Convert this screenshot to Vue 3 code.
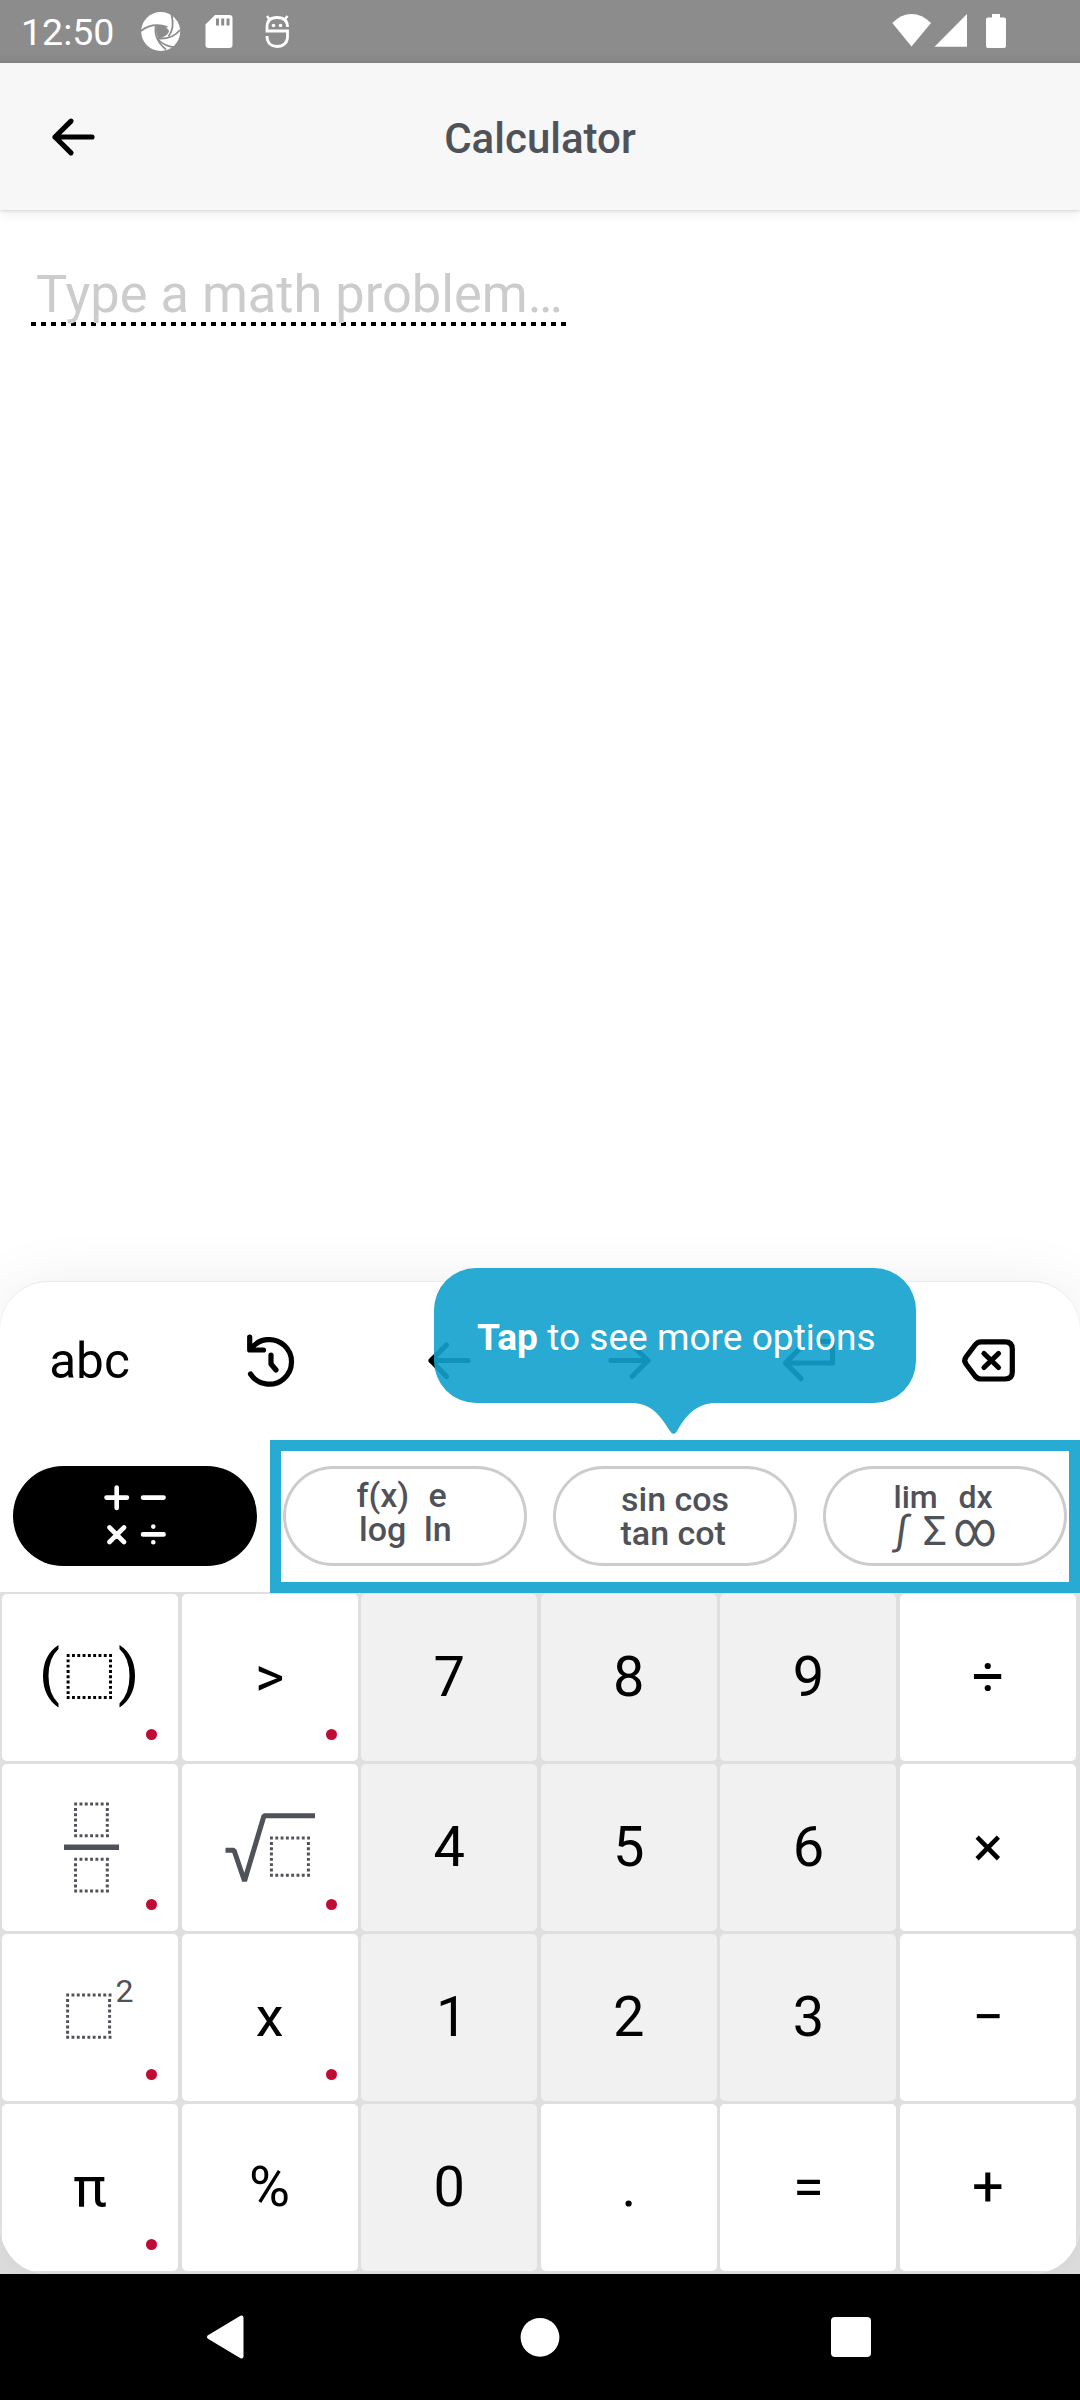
<script setup>
const keys = [
  { id: 'paren', dot: true, icon: 'paren' },
  { label: '>', dot: true },
  { label: '7', digit: true },
  { label: '8', digit: true },
  { label: '9', digit: true },
  { label: '÷' },
  { id: 'frac', dot: true, icon: 'frac' },
  { id: 'sqrt', dot: true, icon: 'sqrt' },
  { label: '4', digit: true },
  { label: '5', digit: true },
  { label: '6', digit: true },
  { label: '×' },
  { id: 'pow', dot: true, icon: 'pow' },
  { label: 'x', dot: true },
  { label: '1', digit: true, one: true },
  { label: '2', digit: true },
  { label: '3', digit: true },
  { label: '−' },
  { label: 'π', dot: true },
  { label: '%' },
  { label: '0', digit: true },
  { label: '.' },
  { label: '=' },
  { label: '+' },
]
</script>

<template>
  <div class="screen">
    <div class="status">
      <span class="clock">12:50</span>
      <svg class="notif" width="170" height="63" viewBox="130 0 170 63">
        <circle cx="160.7" cy="31.5" r="19.5" fill="#fff" />
        <g fill="none" stroke="#8c8c8c" stroke-width="1.8">
          <path d="M171.5 14.5Q175 28 168.5 36.500" />
          <path d="M141 31Q152 22 167.500 27" />
          <path d="M156 25Q153 39 166 49.500" />
          <path d="M180 30Q172 40 157 38.500" />
          <path d="M158 39.500Q166 48 178 47" />
        </g>
        <path d="M156.500 25.500Q164 24 169 30.500Q169 36 158.500 38.800Q155 32 156.500 25.500Z" fill="#8c8c8c" />
        <path d="M215 15h14.500a3 3 0 0 1 3 3v27a3 3 0 0 1-3 3h-21a3 3 0 0 1-3-3V24.500Z" fill="#fff" />
        <path d="M217.500 18.500v7M222.700 18.500v7M228 18.500v7" stroke="#8c8c8c" stroke-width="3" />
        <g fill="none" stroke="#fff" stroke-width="2.800">
          <path d="M287.500 27C287.500 20 283 17.500 277 17.500S267 20 267 27V31H287.500V37C287.500 43 283 46.500 277 46.500S267 43 267 36" />
          <path d="M267 16l3 4M287.500 16l-3 4" stroke-width="2.400" />
        </g>
        <circle cx="273.500" cy="25.500" r="1.800" fill="#fff" />
        <circle cx="280.500" cy="25.500" r="1.800" fill="#fff" />
      </svg>
      <svg class="system" width="120" height="63" viewBox="890 0 120 63" fill="#fff">
        <path d="M911.500 46.500L892.300 23Q901 14 911.500 14T931 23Z" />
        <path d="M934.500 46.700L967 14V46.700Z" />
        <path d="M992 14h8v3.500h4a2 2 0 0 1 2 2V46a2 2 0 0 1-2 2h-16a2 2 0 0 1-2-2V19.500a2 2 0 0 1 2-2h4Z" />
      </svg>
    </div>

    <header class="header">
      <svg class="back" width="60" height="60" viewBox="43 106.500 60 60" fill="none" stroke="#000" stroke-width="5.200" stroke-linecap="round" stroke-linejoin="round">
        <path d="M92 136.500H55M71 120.700L55 136.500L71 152.300" />
      </svg>
      <h1>Calculator</h1>
    </header>

    <main class="work">
      <div class="field">
        <span>Type a math problem…</span>
      </div>
    </main>

    <div class="dock">
    <section class="panel">
      <div class="toolbar">
        <div class="tool abc">abc</div>
        <svg class="tool" viewBox="180 1282 180 158">
          <path d="M250.500 1374A22.300 22.300 0 1 0 251 1349M249.700 1337V1350H263.500M271 1355V1364L276 1370" />
        </svg>
        <svg class="tool" viewBox="360 1282 180 158">
          <path d="M468 1360.500H431M446.500 1345L431 1360.500L446.500 1376.500" />
        </svg>
        <svg class="tool" viewBox="540 1282 180 158">
          <path d="M611 1360.500H648M632 1345L648 1360.500L632 1376.500" />
        </svg>
        <svg class="tool" viewBox="720 1282 180 158">
          <path d="M818 1341.500H832.500V1363H785.500M801 1347.500L785.500 1363L801 1378.700" />
        </svg>
        <svg class="tool" viewBox="900 1282 180 158">
          <path d="M981 1341.800H1005Q1012.300 1341.800 1012.300 1349V1372Q1012.300 1379 1005 1379H981Q977.500 1379 975 1376L966 1364Q963.500 1360.500 966 1357L975 1345Q977.500 1341.800 981 1341.800ZM984 1353.500L998.500 1367.500M998.500 1353.500L984 1367.500" />
        </svg>
      </div>

      <div class="tabs">
        <div class="tab active">
          <svg width="244" height="100" viewBox="13 1466 244 100" fill="none" stroke="#fff" stroke-width="4.600" stroke-linecap="round">
            <path d="M106.500 1497.600H127M116.700 1487.500V1508M143 1497.600H163.600M109.500 1527.500L124 1542M124 1527.500L109.500 1542M143 1534.400H163.600M153.300 1526.500V1526.600M153.300 1542.200V1542.300" />
          </svg>
        </div>
        <div class="tab">
          <svg width="244" height="100" viewBox="283 1466 244 100">
            <text x="356.500" y="1507.300">f(x)</text>
            <text x="428.500" y="1507.300">e</text>
            <text x="359" y="1541">log</text>
            <text x="424" y="1541">ln</text>
          </svg>
        </div>
        <div class="tab">
          <svg width="244" height="100" viewBox="553 1466 244 100">
            <text x="621" y="1510.500">sin cos</text>
            <text x="620.500" y="1544.500">tan cot</text>
          </svg>
        </div>
        <div class="tab">
          <svg width="244" height="100" viewBox="823 1466 244 100">
            <text class="small" x="893.500" y="1508">lim</text>
            <text class="small" x="958.500" y="1508">dx</text>
            <text class="sym" transform="translate(894.500 1543.500) skewX(-8)">∫</text>
            <text class="sym" transform="translate(923 1545) scale(1.040 1.020)">Σ</text>
            <text class="sym" transform="translate(953.500 1546.300) scale(1.050 1.220)">∞</text>
          </svg>
        </div>
      </div>

      <div class="keypad">
        <div v-for="k in keys" :key="k.id || k.label" class="key" :class="{ digit: k.digit, one: k.one }">
          <span v-if="k.label">{{ k.label }}</span>
          <svg v-else-if="k.icon === 'paren'" class="glyph" viewBox="2 1594 176 167">
            <path fill="#000" d="M58.500 1645Q43 1655 43 1676T58.500 1707.500V1703.500Q48.500 1694 48.500 1676T58.500 1649ZM119.500 1645Q135 1655 135 1676T119.500 1707.500V1703.500Q129.500 1694 129.500 1676T119.500 1649Z" />
            <path class="dots black" d="M66.700 1655.500H112M66.700 1697.500H112M68.100 1659.400V1696M110.500 1659.400V1696" />
          </svg>
          <svg v-else-if="k.icon === 'frac'" class="glyph" viewBox="2 1764 176 167">
            <path class="dots" d="M74.200 1804H109M74.200 1835.700H109M75.500 1808V1834M107.300 1808V1834M74.200 1859.300H109M74.200 1891H109M75.500 1863.300V1890M107.300 1863.300V1890" />
            <path d="M64 1847.300H119" stroke="#4f5258" stroke-width="5.600" />
          </svg>
          <svg v-else-if="k.icon === 'sqrt'" class="glyph" viewBox="182 1764 176 167">
            <path d="M225.500 1850.200H234L244.500 1881L264 1815.800H315" fill="none" stroke="#4f5258" stroke-width="5" stroke-linejoin="bevel" />
            <path class="dots" d="M270 1838H310M270 1875.300H310M271.400 1842V1874M308.400 1842V1874" />
          </svg>
          <svg v-else class="glyph" viewBox="2 1934 176 167">
            <path class="dots" d="M66.200 1995H111.500M66.200 2037.300H111.500M67.600 1999V2036M109.600 1999V2036" />
            <text x="115.500" y="2002">2</text>
          </svg>
          <i v-if="k.dot" class="more"></i>
        </div>
      </div>

      <div class="highlight"></div>
      <svg class="tooltip" width="482" height="168" viewBox="434 1268 482 168">
        <path fill="#12a1cd" fill-opacity=".906" d="M476 1268H874A42 42 0 0 1 916 1310V1361A42 42 0 0 1 874 1403H715C696 1403 685 1417 677 1431Q673.600 1437 670 1431C661 1417 652 1403 632 1403H476A42 42 0 0 1 434 1361V1310A42 42 0 0 1 476 1268Z" />
        <text x="477" y="1350"><tspan font-weight="700">Tap</tspan> to see more options</text>
      </svg>
    </section>
    </div>

    <nav class="nav">
      <svg width="60" height="60" viewBox="195 2307 60 60">
        <path d="M241.500 2317.500V2356.500L209 2337Z" fill="#fff" stroke="#fff" stroke-width="4" stroke-linejoin="round" />
      </svg>
      <svg width="60" height="60" viewBox="510 2307 60 60"><circle cx="540" cy="2337.300" r="19.400" fill="#fff" /></svg>
      <svg width="60" height="60" viewBox="821 2307 60 60"><rect x="831" y="2317" width="40" height="40" rx="4" fill="#fff" /></svg>
    </nav>
  </div>
</template>

<style>
body { background: #fff; }
</style>

<style scoped>
.screen {
  width: 1080px;
  height: 2400px;
  display: flex;
  flex-direction: column;
  overflow: hidden;
  background: #fff;
  font-family: Roboto, sans-serif;
  color: #000;
}
svg { display: block; }
.status {
  height: 63px;
  display: flex;
  align-items: center;
  background: linear-gradient(#8c8c8c 52px, #868686);
  color: #fff;
}
.clock { width: 109px; padding-left: 21px; font-size: 37.500px; line-height: 63px; padding-top: 2px; }
.system { margin-left: auto; margin-right: 70px; }
.header {
  height: 147px;
  display: flex;
  align-items: center;
  background: #f7f7f7;
  box-shadow: 0 1px 3px rgba(0, 0, 0, .12), 0 4px 12px rgba(0, 0, 0, .07);
  position: relative;
}
.back { margin-left: 43px; }
h1 {
  flex: 1;
  margin: 4px 103px 0 0;
  text-align: center;
  font-size: 42px;
  font-weight: 500;
  color: #4f5258;
}
.work { height: 1072px; padding: 47px 31px 0; box-sizing: border-box; }
.field {
  width: 535px;
  height: 69px;
  box-sizing: border-box;
  padding-left: 5px;
  font-size: 52.400px;
  line-height: 75px;
  color: #ccc;
  white-space: nowrap;
  background: repeating-linear-gradient(90deg, #000 0 5px, transparent 5px 10px) 0 65px / 100% 4px no-repeat;
}
.dock { background: linear-gradient(transparent 900px, #dfdfdf 945px); }
.panel {
  position: relative;
  height: 992px;
  display: flex;
  flex-direction: column;
  border-radius: 48px;
  background: #fff;
  box-shadow: 0 -1px 1px rgba(0, 0, 0, .06), 0 0 60px rgba(0, 0, 0, .07);
}
.toolbar { height: 158px; display: flex; }
.tool { width: 180px; height: 158px; fill: none; stroke: #000; stroke-width: 5.200px; stroke-linecap: round; stroke-linejoin: round; }
.abc { text-align: center; font-size: 49.500px; line-height: 158px; text-indent: -1px; }
.tabs { height: 152px; padding: 0 13px; display: flex; align-items: center; gap: 26px; }
.tab { width: 244px; height: 100px; border-radius: 50px; box-shadow: inset 0 0 0 3px #ccc; flex: none; }
.tab.active { background: #000; box-shadow: none; }
.tab text { font-size: 34px; font-weight: 500; fill: #4f5258; }
.tab .small { font-size: 32px; }
.tab .sym { font-size: 40px; font-weight: 400; }
.keypad {
  flex: 1;
  box-sizing: border-box;
  padding: 2px 4px 3px 2px;
  display: grid;
  grid-template-columns: repeat(6, 176px);
  grid-template-rows: repeat(4, 167px);
  justify-content: space-between;
  row-gap: 3px;
  background: #dfdfdf;
  border-radius: 0 0 48px 48px;
  overflow: hidden;
}
.key {
  position: relative;
  display: flex;
  align-items: center;
  justify-content: center;
  border-radius: 5px;
  background: #fff;
  font-size: 56px;
}
.key span { padding-bottom: 2px; }
.one span { padding-left: 5px; }
.digit { background: #f1f1f1; }
.glyph { width: 176px; height: 167px; }
.glyph text { font-size: 32px; fill: #4f5258; }
.dots { fill: none; stroke: #4f5258; stroke-width: 3px; stroke-dasharray: 2.900 2.400; }
.dots.black { stroke: #000; }
.more { position: absolute; right: 21px; bottom: 21px; width: 11px; height: 11px; border-radius: 50%; background: #be0c34; }
.highlight { position: absolute; left: 270px; top: 158px; width: 810px; height: 153px; box-sizing: border-box; border: 11px solid #27abd2; }
.tooltip { position: absolute; left: 434px; top: -14px; }
.tooltip text { font-size: 37.100px; fill: #fff; }
.nav {
  height: 126px;
  display: flex;
  align-items: center;
  gap: 253px;
  padding-left: 195px;
  background: #000;
}
.nav svg:nth-child(2) { margin: 0 -2px 0 2px; }
</style>
